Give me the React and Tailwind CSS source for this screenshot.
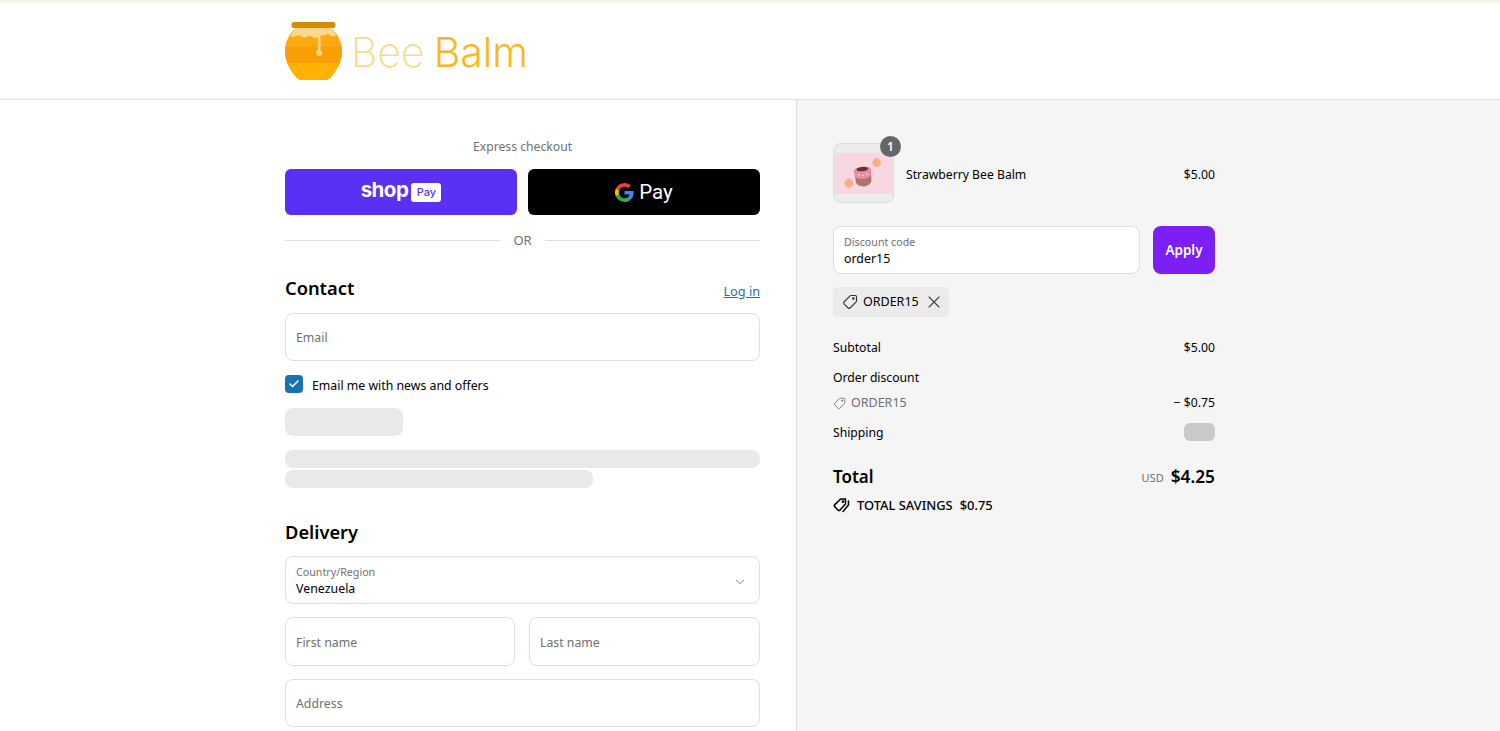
import { Check, ChevronDown, X } from 'lucide-react'

const font = { fontFamily: '"Noto Sans", sans-serif' }
const logoFont = { fontFamily: 'Inter, sans-serif' }

function JarLogo() {
  const body = 'M11 6 C4 12 0 20 0 29 C0 39 5 48 11 55 C13 57.500 15 58 18 58 H39 C42 58 44 57.500 46 55 C52 48 57 39 57 29 C57 20 53 12 46 6 Z'
  return (
    <svg width="58" height="58" viewBox="0 0 58 58" className="shrink-0">
      <defs>
        <clipPath id="jar-body">
          <path d={body} />
        </clipPath>
      </defs>
      <path d={body} fill="#fda90f" />
      <g clipPath="url(#jar-body)">
        <rect x="0" y="25" width="58" height="17" fill="#f99e05" />
        <rect x="0" y="41" width="58" height="17" fill="#ffb300" />
      </g>
      <path d="M11 6 H46 C48 8 50 10 51 13 C48 16 46 14 44 12.500 C41 11.500 39 15 36 13 L35.500 13 V28 H33 V15 C30 18 27 14 24 14 C21 15 19 17 16 14 C13 12 11 15 8 15 C7 15 6 14.500 5.500 14 C7 11 9 8 11 6 Z" fill="#fcd88f" />
      <circle cx="34.200" cy="31" r="3" fill="#fcd88f" />
      <rect x="6.500" y="0" width="44" height="6" rx="2.500" fill="#d68c00" />
    </svg>
  )
}

function TagIcon({ size = 16, color = '#333' }) {
  return (
    <svg width={size} height={size} viewBox="0 0 16 16" fill="none" stroke={color} strokeWidth="1.100" className="shrink-0">
      <path d="M14.500 2.600 V7 a1.200 1.200 0 0 1 -.4 .9 L8 14 a1.300 1.300 0 0 1 -1.800 0 L2 9.800 a1.300 1.300 0 0 1 0 -1.800 L8.100 1.900 a1.200 1.200 0 0 1 .9 -.4 H13.400 a1.100 1.100 0 0 1 1.100 1.100 Z" strokeLinejoin="round" />
      <circle cx="11.400" cy="4.600" r=".7" fill={color} />
    </svg>
  )
}

function SavingsIcon() {
  return (
    <svg width="17" height="17" viewBox="0 0 17 17" fill="none" stroke="#000" strokeWidth="1.500" className="shrink-0">
      <path d="M12.500 2 V7 L6.800 13.200 a1.200 1.200 0 0 1 -1.700 0 L1.600 9.600 a1.200 1.200 0 0 1 0 -1.700 L7.600 2 Z" strokeLinejoin="round" />
      <path d="M15.500 4 V8 L10 14.500" strokeLinecap="round" />
      <circle cx="10" cy="4.600" r=".6" fill="#000" />
    </svg>
  )
}

function GoogleG() {
  return (
    <svg width="19" height="19" viewBox="0 0 48 48" className="shrink-0">
      <path fill="#EA4335" d="M24 9.500c3.500 0 6.700 1.200 9.200 3.600l6.900-6.900C35.900 2.400 30.500 0 24 0 14.600 0 6.500 5.400 2.600 13.200l8 6.200C12.500 13.600 17.800 9.500 24 9.500z" />
      <path fill="#4285F4" d="M46.900 24.500c0-1.600-.1-3.100-.4-4.500H24v9h12.900c-.6 3-2.200 5.500-4.700 7.200l7.700 6c4.500-4.200 7-10.300 7-17.700z" />
      <path fill="#FBBC05" d="M10.500 28.600c-.5-1.400-.8-3-.8-4.600s.3-3.200.8-4.600l-8-6.200C.9 16.500 0 20.100 0 24s.9 7.500 2.600 10.800l7.900-6.200z" />
      <path fill="#34A853" d="M24 48c6.500 0 11.900-2.100 15.900-5.800l-7.700-6c-2.200 1.500-4.900 2.300-8.200 2.300-6.200 0-11.500-4.100-13.400-9.900l-8 6.200C6.500 42.600 14.600 48 24 48z" />
    </svg>
  )
}

function ProductThumb() {
  return (
    <div className="relative w-[61px] h-[60px] shrink-0 rounded-lg border border-[#dcdcdc] bg-[#ececec]">
      <svg viewBox="0 0 59 42" className="w-full h-[41px] mt-[9px] block">
        <rect width="59" height="42" fill="#f8d7e2" />
        <circle cx="43" cy="10" r="4.500" fill="#f6ae88" />
        <circle cx="14.500" cy="31" r="4.500" fill="#f6ae88" />
        <g transform="rotate(-6 29 23)">
          <path d="M20.500 18 C20.500 13 37.500 13 37.500 18 L37 29 C36 36 22 36 21 29 Z" fill="#ad7470" />
          <path d="M20.500 18 C20.500 13 37.500 13 37.500 18 L37.200 24 C32 27.500 26 27.500 20.800 24 Z" fill="#ec8aa4" />
          <ellipse cx="29" cy="16.500" rx="6" ry="2.200" fill="#5a3533" />
          <circle cx="25" cy="22" r=".8" fill="#fff" />
          <circle cx="29" cy="23" r=".8" fill="#fff" />
          <circle cx="33" cy="22" r=".8" fill="#fff" />
        </g>
      </svg>
      <span className="absolute -top-[8px] -right-[8px] w-[21px] h-[21px] rounded-full bg-[#666666] text-white text-[12px] font-semibold flex items-center justify-center">1</span>
    </div>
  )
}

function Field({ label, className = '' }) {
  return (
    <div className={`h-12 rounded-lg border border-[#dedede] bg-white px-[10px] pt-[3px] flex items-center text-[12.3px] text-[#707070] ${className}`}>
      {label}
    </div>
  )
}

function FilledField({ label, value, right }) {
  return (
    <div className="h-12 rounded-lg border border-[#dedede] bg-white pl-[10px] pr-[12px] pt-[3px] flex items-center justify-between">
      <div className="flex flex-col">
        <span className="text-[10.7px] leading-[14px] text-[#707070]">{label}</span>
        <span className="text-[12.4px] leading-[19px] text-black">{value}</span>
      </div>
      {right}
    </div>
  )
}

export default function App() {
  return (
    <div className="h-[731px] overflow-hidden bg-white flex flex-col" style={font}>
      <header className="h-[100px] shrink-0 border-t-[3px] border-t-[#f6f5ea] border-b border-b-[#dedede] pl-[285px] pt-[19px]">
        <div className="flex items-start h-[58px]">
          <JarLogo />
          <span className="ml-[8px] text-[41px] leading-[60px] font-extralight text-[#fdd78a]" style={logoFont}>Bee</span>
          <span className="ml-[9px] text-[41px] leading-[60px] font-light text-[#f9b81f]" style={logoFont}>Balm</span>
        </div>
      </header>

      <main className="flex-1 flex min-h-0">
        <section className="w-[797px] shrink-0 border-r border-[#dedede] pl-[285px] pr-[36px] pt-[38px]">
          <p className="text-center text-[12.2px] leading-[17px] text-[#707070]">Express checkout</p>
          <div className="flex gap-[11px] mt-[14px]">
            <div className="flex-1 h-[46px] rounded-[6px] bg-[#5a31f4] flex items-center justify-center gap-[3px]">
              <span className="text-white text-[20.5px] font-bold tracking-[-0.5px] leading-none -mt-[4px]" style={{ fontFamily: 'Inter, sans-serif' }}>shop</span>
              <span className="bg-white text-[#5a31f4] rounded-[3px] w-[30px] h-[19px] text-[11px] font-medium flex items-center justify-center" style={{ fontFamily: 'Inter, sans-serif' }}>Pay</span>
            </div>
            <div className="flex-1 h-[46px] rounded-[6px] bg-black flex items-center justify-center gap-[5px]">
              <GoogleG />
              <span className="text-white text-[20.5px] leading-none" style={{ fontFamily: 'Roboto, sans-serif' }}>Pay</span>
            </div>
          </div>
          <div className="flex items-center gap-[13px] mt-[16px] h-[18px] text-[13px] text-[#707070]">
            <div className="flex-1 h-px bg-[#dedede]" />
            <span className="mt-[2px]">OR</span>
            <div className="flex-1 h-px bg-[#dedede]" />
          </div>

          <div className="flex items-end justify-between mt-[24px] h-[30px]">
            <h2 className="text-[18.3px] leading-[30px] font-semibold text-black">Contact</h2>
            <a className="text-[12.7px] leading-[18px] mb-[3px] text-[#1773b0] underline">Log in</a>
          </div>
          <Field label="Email" className="mt-[10px]" />
          <div className="flex items-center gap-[9px] mt-[14px] h-[18px]">
            <span className="w-[18px] h-[18px] rounded-[4px] bg-[#1773b0] flex items-center justify-center">
              <Check size={12} strokeWidth={3} color="white" />
            </span>
            <span className="text-[12.3px] pt-[4px] text-black">Email me with news and offers</span>
          </div>
          <div className="w-[118px] h-[28px] rounded-lg bg-[#e9e9e9] mt-[15px]" />
          <div className="h-[18px] rounded-lg bg-[#e9e9e9] mt-[14px]" />
          <div className="w-[308px] h-[18px] rounded-lg bg-[#e9e9e9] mt-[2px]" />

          <h2 className="text-[18.3px] leading-[30px] font-semibold text-black mt-[29px]">Delivery</h2>
          <div className="mt-[9px]">
            <FilledField label="Country/Region" value="Venezuela" right={<ChevronDown size={14} strokeWidth={1.5} color="#666" />} />
          </div>
          <div className="flex gap-[14px] mt-[13px]">
            <Field label="First name" className="w-[230px] !h-[49px]" />
            <Field label="Last name" className="flex-1 !h-[49px]" />
          </div>
          <Field label="Address" className="mt-[13px]" />
        </section>

        <aside className="flex-1 bg-[#f5f5f5] pl-[36px] pt-[43px]">
          <div className="w-[382px]">
            <div className="flex items-center">
              <ProductThumb />
              <span className="ml-[12px] pt-[5px] text-[12.2px] text-black">Strawberry Bee Balm</span>
              <span className="ml-auto pt-[5px] text-[12.2px] text-black">$5.00</span>
            </div>
            <div className="flex gap-[13px] mt-[23px]">
              <div className="flex-1">
                <FilledField label="Discount code" value="order15" />
              </div>
              <div className="w-[62px] h-12 pt-[1px] rounded-lg bg-[#7b1ff5] text-white text-[13.5px] font-semibold flex items-center justify-center">Apply</div>
            </div>
            <div className="inline-flex items-center h-[30px] w-[116px] mt-[13px] rounded-[5px] bg-[#ebebeb] pl-[9px] text-[12.5px] text-black">
              <TagIcon size={16} />
              <span className="ml-[5px]">ORDER15</span>
              <X size={20} strokeWidth={1.300} className="ml-[5px] text-[#444]" />
            </div>

            <div className="flex justify-between items-center mt-[21px] h-[18px] pt-[2px] text-[12.2px] text-black">
              <span>Subtotal</span>
              <span>$5.00</span>
            </div>
            <div className="mt-[12px] h-[18px] pt-[1px] text-[12.2px] leading-[18px] text-black">Order discount</div>
            <div className="flex justify-between items-center mt-[7px] h-[18px] pt-[2px] text-[12.2px]">
              <span className="flex items-center gap-[5px] text-[12.5px] text-[#707070]"><TagIcon size={13} color="#707070" />ORDER15</span>
              <span className="text-black">− $0.75</span>
            </div>
            <div className="flex justify-between items-center mt-[12px] h-[18px] text-[12.2px] text-black">
              <span className="pt-[2px]">Shipping</span>
              <span className="w-[31px] h-[18px] rounded-md bg-[#c9c9c9]" />
            </div>
            <div className="flex justify-between items-center mt-[21px] h-[28px] pt-[1px] text-black">
              <span className="text-[17px] font-semibold">Total</span>
              <span className="flex items-center gap-[7px]">
                <span className="text-[11px] text-[#707070] mt-[3px]">USD</span>
                <span className="text-[17.3px] font-semibold">$4.25</span>
              </span>
            </div>
            <div className="flex items-center gap-[7px] mt-[5px] h-[20px] text-[12.9px] font-medium text-black">
              <SavingsIcon />
              <span className="pt-[2px]">TOTAL SAVINGS</span>
              <span className="pt-[2px]">$0.75</span>
            </div>
          </div>
        </aside>
      </main>
    </div>
  )
}
